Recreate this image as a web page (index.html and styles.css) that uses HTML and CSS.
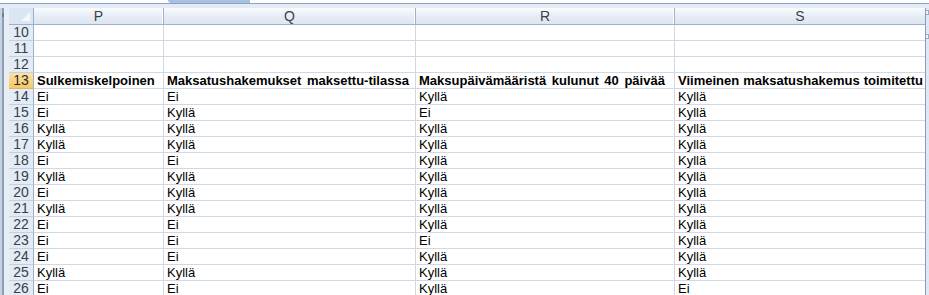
FILE: index.html
```html
<!DOCTYPE html>
<html lang="fi">
<head>
<meta charset="utf-8">
<title>Taulukko</title>
<link rel="stylesheet" href="styles.css">
</head>
<body>
<div class="window">
  <div class="topbar"><div class="fx-pill"></div></div>
  <div class="main">
    <div class="frame-left"><div class="frame-mark"></div></div>
    <div class="sheet">
      <div class="corner"></div>
      <div class="colhead">P</div>
      <div class="colhead">Q</div>
      <div class="colhead">R</div>
      <div class="colhead last">S</div>

      <div class="rowhead">10</div><div class="cell"></div><div class="cell"></div><div class="cell"></div><div class="cell last"></div>
      <div class="rowhead">11</div><div class="cell"></div><div class="cell"></div><div class="cell"></div><div class="cell last"></div>
      <div class="rowhead">12</div><div class="cell"></div><div class="cell"></div><div class="cell"></div><div class="cell last"></div>
      <div class="rowhead active">13</div><div class="cell bold">Sulkemiskelpoinen</div><div class="cell bold">Maksatushakemukset maksettu-tilassa</div><div class="cell bold">Maksupäivämääristä kulunut 40 päivää</div><div class="cell bold last">Viimeinen maksatushakemus toimitettu</div>
      <div class="rowhead">14</div><div class="cell">Ei</div><div class="cell">Ei</div><div class="cell">Kyllä</div><div class="cell last">Kyllä</div>
      <div class="rowhead">15</div><div class="cell">Ei</div><div class="cell">Kyllä</div><div class="cell">Ei</div><div class="cell last">Kyllä</div>
      <div class="rowhead">16</div><div class="cell">Kyllä</div><div class="cell">Kyllä</div><div class="cell">Kyllä</div><div class="cell last">Kyllä</div>
      <div class="rowhead">17</div><div class="cell">Kyllä</div><div class="cell">Kyllä</div><div class="cell">Kyllä</div><div class="cell last">Kyllä</div>
      <div class="rowhead">18</div><div class="cell">Ei</div><div class="cell">Ei</div><div class="cell">Kyllä</div><div class="cell last">Kyllä</div>
      <div class="rowhead">19</div><div class="cell">Kyllä</div><div class="cell">Kyllä</div><div class="cell">Kyllä</div><div class="cell last">Kyllä</div>
      <div class="rowhead">20</div><div class="cell">Ei</div><div class="cell">Kyllä</div><div class="cell">Kyllä</div><div class="cell last">Kyllä</div>
      <div class="rowhead">21</div><div class="cell">Kyllä</div><div class="cell">Kyllä</div><div class="cell">Kyllä</div><div class="cell last">Kyllä</div>
      <div class="rowhead">22</div><div class="cell">Ei</div><div class="cell">Ei</div><div class="cell">Kyllä</div><div class="cell last">Kyllä</div>
      <div class="rowhead">23</div><div class="cell">Ei</div><div class="cell">Ei</div><div class="cell">Ei</div><div class="cell last">Kyllä</div>
      <div class="rowhead">24</div><div class="cell">Ei</div><div class="cell">Ei</div><div class="cell">Kyllä</div><div class="cell last">Kyllä</div>
      <div class="rowhead">25</div><div class="cell">Kyllä</div><div class="cell">Kyllä</div><div class="cell">Kyllä</div><div class="cell last">Kyllä</div>
      <div class="rowhead">26</div><div class="cell">Ei</div><div class="cell">Ei</div><div class="cell">Kyllä</div><div class="cell last">Ei</div>
    </div>
    <div class="frame-right"><div class="split-top"></div><div class="split-mid"></div></div>
  </div>
</div>
</body>
</html>
```

FILE: styles.css
```css
* { box-sizing: border-box; }

html, body {
  margin: 0;
  padding: 0;
  background: #ffffff;
  overflow: hidden;
}

.window {
  width: 929px;
  height: 295px;
  overflow: hidden;
  font-family: "Liberation Sans", Arial, sans-serif;
}

.topbar {
  height: 8px;
  background: linear-gradient(#ffffff 0, #ffffff 3px, #8fa3bd 3px, #8fa3bd 4px, #e3ebf6 4px);
  position: relative;
}

.fx-pill {
  position: absolute;
  left: 168px;
  top: 0;
  width: 82px;
  height: 3px;
  background: #a9c1e0;
  border-bottom-left-radius: 4px;
}

.main {
  display: flex;
  height: 287px;
}

.frame-left {
  width: 9px;
  flex: none;
  background: linear-gradient(90deg, #c7d3e2 0, #c7d3e2 2px, #8d9fb6 2px, #8d9fb6 4px, #e9eef6 4px);
  position: relative;
}

.frame-mark {
  position: absolute;
  left: 2px;
  top: 5px;
  width: 2px;
  height: 4px;
  background: #6c7f98;
}

.frame-right {
  width: 4px;
  flex: none;
  border-left: 1px solid #8a9bb2;
  background: #dfe8f4;
  position: relative;
}

.split-top {
  position: absolute;
  left: 0;
  top: 2px;
  width: 3px;
  height: 5px;
  border: 1px solid #9aabc1;
  border-left: none;
  background: #f2f6fb;
}

.split-mid {
  position: absolute;
  left: 0;
  top: 26px;
  width: 3px;
  height: 5px;
  border: 1px solid #9aabc1;
  border-left: none;
  background: #f2f6fb;
}

.sheet {
  flex: 1;
  display: grid;
  grid-template-columns: 25px 130px 252px 259px 1fr;
  grid-auto-rows: 16px;
  grid-template-rows: 17px;
  align-content: start;
  overflow: hidden;
  font-size: 13px;
  color: #000;
}

.corner {
  background: #dbe5f3;
  border-right: 1px solid #9eb1c9;
  border-bottom: 1px solid #9eb1c9;
  position: relative;
}

.corner::after {
  content: "";
  position: absolute;
  right: 3px;
  bottom: 3px;
  width: 0;
  height: 0;
  border-left: 9px solid transparent;
  border-bottom: 9px solid #f4f8fd;
}

.colhead {
  background: linear-gradient(#f9fbfd, #e6ecf5 55%, #dde5f0);
  border-right: 1px solid #9eb1c9;
  border-bottom: 1px solid #9eb1c9;
  box-shadow: inset -1px 0 0 #ffffff;
  text-align: center;
  line-height: 16px;
  color: #3b3f45;
  font-size: 14px;
}

.colhead.last {
  border-right: none;
  box-shadow: none;
}

.rowhead {
  background: #e3ebf6;
  border-right: 1px solid #9eb1c9;
  border-bottom: 1px solid #c3d0e2;
  text-align: center;
  line-height: 15px;
  color: #3b3f45;
  font-size: 14px;
}

.rowhead.active {
  background: linear-gradient(#fbe0a8, #f6c865);
  border-bottom-color: #e6b65a;
  color: #2b2b2b;
}

.cell {
  border-right: 1px solid #d0d7e5;
  border-bottom: 1px solid #d0d7e5;
  padding-left: 3px;
  line-height: 15px;
  white-space: nowrap;
  overflow: hidden;
}

.cell.last {
  border-right: none;
}

.cell.bold {
  font-weight: bold;
  word-spacing: 2px;
}

.cell.bold.last {
  word-spacing: 0.5px;
}
```
